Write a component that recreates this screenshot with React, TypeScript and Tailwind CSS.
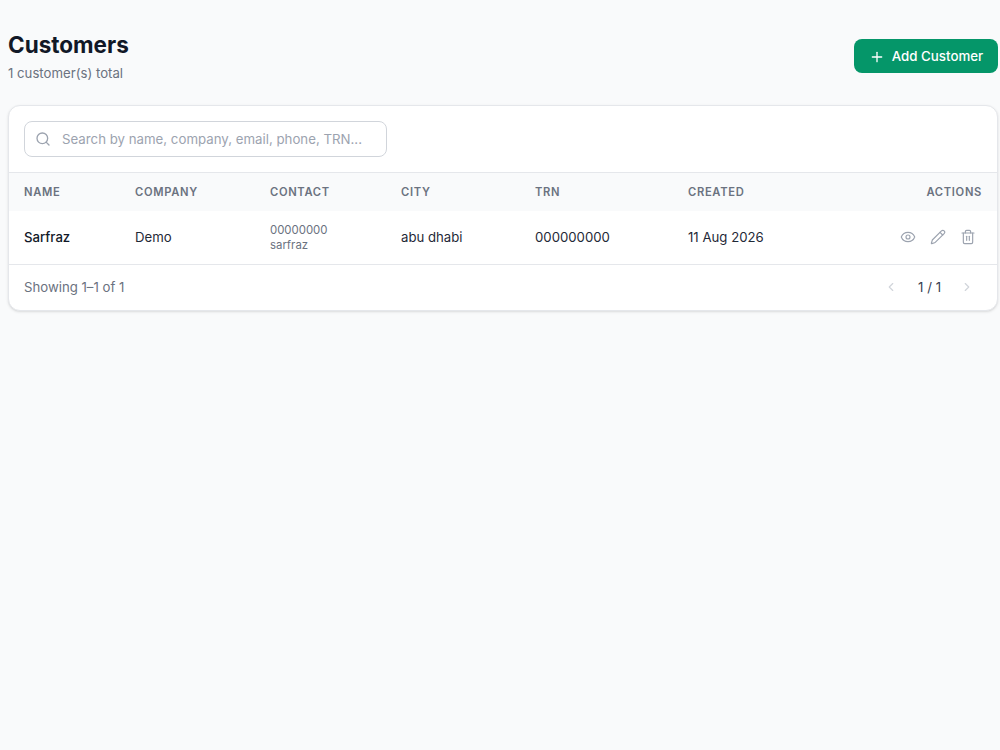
import { Plus, Search, Eye, Pencil, Trash2, ChevronLeft, ChevronRight } from "lucide-react";

const th = "h-[38px] px-0 pt-[2px] text-left text-[11.2px] font-semibold tracking-[0.06em] text-[#6b7280] uppercase";

export default function App() {
  return (
    <div className="min-h-[750px] bg-[#f9fafb] pl-2 pr-[2px] pt-4 font-['Inter',sans-serif] text-[#111827]">
      <div className="flex h-[89px] items-start justify-between pt-[15px]">
        <div>
          <h1 className="text-[22.5px] leading-[27px] font-bold text-[#111827]">Customers</h1>
          <p className="mt-[5px] text-[13.2px] leading-[20px] text-[#6b7280]">1 customer(s) total</p>
        </div>
        <button className="mt-[8px] flex h-[34px] w-[144px] items-center justify-center gap-[7px] rounded-lg bg-[#059669] pt-px text-[13.3px] font-medium text-white">
          <Plus size={16} strokeWidth={2} />
          <span>Add Customer</span>
        </button>
      </div>
      <div className="overflow-hidden rounded-xl border border-[#e5e7eb] bg-white shadow-sm">
        <div className="h-[66px] px-[15px] pt-[15px]">
          <div className="flex h-9 w-[363px] items-center gap-[11px] rounded-lg border border-[#d1d5db] bg-white pl-[10px]">
            <Search size={16} strokeWidth={2} className="shrink-0 text-[#9ca3af]" />
            <span className="pt-px text-[13.25px] text-[#9ca3af]">Search by name, company, email, phone, TRN...</span>
          </div>
        </div>
        <table className="w-full table-fixed border-collapse">
          <thead>
            <tr className="border-t border-[#e5e7eb] bg-[#f9fafb]">
              <th className={`${th} w-[126px] pl-[15px]`}>Name</th>
              <th className={`${th} w-[135px]`}>Company</th>
              <th className={`${th} w-[131px]`}>Contact</th>
              <th className={`${th} w-[134px]`}>City</th>
              <th className={`${th} w-[153px]`}>TRN</th>
              <th className={`${th} w-[210px]`}>Created</th>
              <th className={`${th} pr-[15px] !text-right`}>Actions</th>
            </tr>
          </thead>
          <tbody>
            <tr className="h-[53px] text-[13.2px] text-[#1f2937]">
              <td className="pt-[2px] pl-[15px] font-medium text-[#111827]">Sarfraz</td>
              <td className="pt-[2px]">Demo</td>
              <td className="pt-[2px] text-[11.4px] leading-[15px] text-[#6b7280]">
                <div>00000000</div>
                <div>sarfraz</div>
              </td>
              <td className="pt-[2px]">abu dhabi</td>
              <td className="pt-[2px]">000000000</td>
              <td className="pt-[2px]">11 Aug 2026</td>
              <td className="pr-[21px]">
                <div className="flex items-center justify-end gap-[14px] text-[#9ca3af]">
                  <Eye size={16} strokeWidth={1.75} />
                  <Pencil size={16} strokeWidth={1.75} />
                  <Trash2 size={16} strokeWidth={1.75} />
                </div>
              </td>
            </tr>
          </tbody>
        </table>
        <div className="flex h-[46px] items-center justify-between border-t border-[#e5e7eb] pt-px pl-[15px] pr-[23px]">
          <span className="text-[13.2px] text-[#6b7280]">Showing 1–1 of 1</span>
          <div className="flex items-center text-[13.2px] text-[#374151]">
            <ChevronLeft size={14} className="text-[#d1d5db]" />
            <span className="ml-[20px] mr-[19px]">1 / 1</span>
            <ChevronRight size={14} className="text-[#d1d5db]" />
          </div>
        </div>
      </div>
    </div>
  );
}
